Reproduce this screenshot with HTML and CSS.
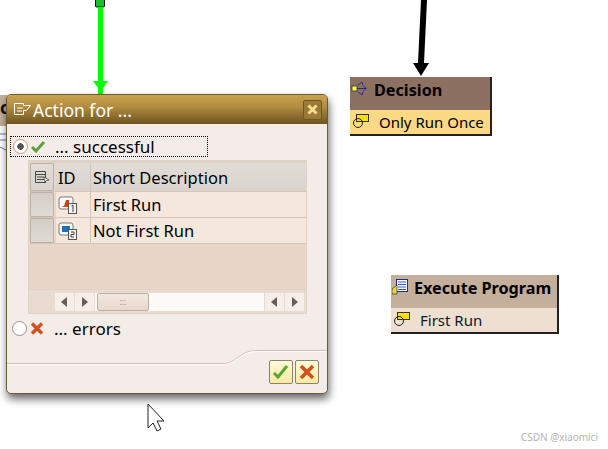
FILE: index.html
```html
<!DOCTYPE html>
<html lang="en">
<head>
  <meta charset="UTF-8" />
  <title>Action for ...</title>
  <link rel="stylesheet" href="styles.css">
</head>
<body>

<!-- workflow canvas -->
<main class="canvas">
  <svg class="links" width="608" height="449" xmlns="http://www.w3.org/2000/svg" aria-hidden="true">
    <rect x="95.5" y="-4" width="9" height="11" rx="1" fill="#18c030" stroke="#111"/>
    <rect x="98" y="7" width="5" height="79" fill="#00ff00"/>
    <polygon points="93,81 108,81 103,88 103,94 98,94 98,88" fill="#00ff00"/>
    <polygon points="421,0 427,0 424,63 429,63 421,76 413,63 418,63" fill="#000"/>
    <path d="M148 404v24l5-5 4 8 4-2-4-8h7z" fill="#fff" stroke="#222"/>
    <path d="M0 134h6M0 140h6M0 147l6 3" stroke="#5a7a9a" fill="none"/>
  </svg>

  <div class="hidden-node">c</div>

  <section class="node node-decision">
    <div class="node-head">
      <svg width="18" height="16" viewBox="0 0 18 16" aria-hidden="true">
        <rect x="1" y="5" width="5" height="5" fill="#ffff40" stroke="#333" stroke-width="0.8"/>
        <path d="M6 7.5h9M15 7.5l-3-3M15 7.5l-3 3M7 4l4-3 1 3M7 11l4 3 1-3" fill="none" stroke="#1c2c9c"/>
      </svg>
      <span>Decision</span>
    </div>
    <div class="node-row">
      <svg width="18" height="14" viewBox="0 0 18 14" aria-hidden="true">
        <rect x="4.5" y="0.5" width="12" height="7" fill="#f4e000" stroke="#333"/>
        <circle cx="6" cy="9" r="4.5" fill="none" stroke="#222"/>
      </svg>
      <span>Only Run Once</span>
    </div>
  </section>

  <section class="node node-program">
    <div class="node-head">
      <svg width="16" height="16" viewBox="0 0 16 16" aria-hidden="true">
        <rect x="4.5" y="0.5" width="11" height="12" fill="#fff" stroke="#1c2c9c"/>
        <path d="M6 3h8M6 5.500h8M6 8h8M6 10.500h8" stroke="#3050d0"/>
        <polygon points="0,15 0,10 5,6 5,15" fill="#f0d040" stroke="#333" stroke-width="0.7"/>
      </svg>
      <span>Execute Program</span>
    </div>
    <div class="node-row">
      <svg width="18" height="14" viewBox="0 0 18 14" aria-hidden="true">
        <rect x="4.5" y="0.500" width="12" height="7" fill="#f4e000" stroke="#333"/>
        <circle cx="6" cy="9" r="4.500" fill="none" stroke="#222"/>
      </svg>
      <span>First Run</span>
    </div>
  </section>

  <!-- dialog -->
  <section class="dialog">
    <header class="dialog-title">
      <svg width="17" height="13" viewBox="0 0 17 13" aria-hidden="true">
        <path d="M0.500 0.500h9v2h7l-4 5h-3v4h-9z" fill="none" stroke="#fff"/>
        <path d="M3 5h6M3 8h5" stroke="#fff"/>
      </svg>
      <h1>Action for ...</h1>
      <button class="close-btn" title="Close">
        <svg width="11" height="11" viewBox="0 0 11 11" aria-hidden="true">
          <path d="M1.500 1.500l8 8M9.500 1.500l-8 8" stroke="#fbdc8c" stroke-width="3"/>
        </svg>
      </button>
    </header>

    <div class="dialog-body">
      <div class="option option-focus">
        <span class="radio radio-on"></span>
        <svg class="status" width="15" height="13" viewBox="0 0 15 13" aria-hidden="true">
          <path d="M1 7l4 4 8-9" fill="none" stroke="#5da23a" stroke-width="3"/>
        </svg>
        <span class="option-label">... successful</span>
      </div>

      <div class="table">
        <div class="table-row table-head">
          <div class="cell cell-select">
            <svg width="15" height="13" viewBox="0 0 15 13" aria-hidden="true">
              <path d="M0.500 0.500h10v11h-10zM0.500 3.500h10M2 6h7M2 8.500h7" fill="none" stroke="#444"/>
              <polygon points="9,6 14,9 11,9.500 10,12" fill="#fff" stroke="#333" stroke-width="0.7"/>
            </svg>
          </div>
          <div class="cell cell-id">ID</div>
          <div class="cell cell-text">Short Description</div>
        </div>
        <div class="table-row">
          <div class="cell cell-select"></div>
          <div class="cell cell-id">
            <svg width="19" height="18" viewBox="0 0 19 18" aria-hidden="true">
              <rect x="1" y="1" width="14" height="12" rx="2" fill="#fff" stroke="#777"/>
              <path d="M3 11l3-1 2-6h3v7z" fill="#d04010"/>
              <rect x="10.500" y="7.500" width="8" height="10" fill="#f4f4f4" stroke="#555"/>
              <path d="M13.500 10l1.500-1v7" fill="none" stroke="#444"/>
            </svg>
          </div>
          <div class="cell cell-text">First Run</div>
        </div>
        <div class="table-row">
          <div class="cell cell-select"></div>
          <div class="cell cell-id">
            <svg width="19" height="18" viewBox="0 0 19 18" aria-hidden="true">
              <rect x="1" y="1" width="14" height="12" rx="2" fill="#fff" stroke="#777"/>
              <rect x="4" y="4" width="8" height="6" fill="#1c70b4"/>
              <rect x="10.500" y="7.500" width="8" height="10" fill="#f4f4f4" stroke="#555"/>
              <path d="M13 10h3v2.500h-3v2.500h3" fill="none" stroke="#444"/>
            </svg>
          </div>
          <div class="cell cell-text">Not First Run</div>
        </div>
        <div class="table-empty"></div>
        <div class="table-scroll">
          <button class="arrow arrow-left"></button>
          <button class="arrow arrow-right"></button>
          <div class="track"><div class="thumb">:::</div></div>
          <button class="arrow arrow-left"></button>
          <button class="arrow arrow-right"></button>
        </div>
      </div>

      <div class="option">
        <span class="radio"></span>
        <svg class="status" width="15" height="13" viewBox="0 0 15 13" aria-hidden="true">
          <path d="M2 1.500l10 10M12 1.500l-10 10" stroke="#d2501e" stroke-width="3.400"/>
        </svg>
        <span class="option-label">... errors</span>
      </div>
    </div>

    <footer class="dialog-foot">
      <svg class="foot-curve" width="320" height="24" viewBox="0 0 320 24" aria-hidden="true">
        <path d="M0 13.500H217C230 13.500 232 0.500 250 0.500H320" fill="none" stroke="#cfc0b4"/>
        <path d="M0 14.500H217C230 14.500 232 1.500 250 1.500H320" fill="none" stroke="#fff"/>
      </svg>
      <button class="foot-btn">
        <svg width="18" height="16" viewBox="0 0 18 16" aria-hidden="true">
          <path d="M2 9l4 4 9-11" fill="none" stroke="#5da23a" stroke-width="3"/>
        </svg>
      </button>
      <button class="foot-btn">
        <svg width="16" height="16" viewBox="0 0 16 16" aria-hidden="true">
          <path d="M2 2l12 12M14 2l-12 12" stroke="#d2501e" stroke-width="3.600"/>
        </svg>
      </button>
    </footer>
  </section>

  <div class="watermark">CSDN @xiaomici</div>
</main>

</body>
</html>
```

FILE: styles.css
```css
* {
  box-sizing: border-box;
}

body {
  margin: 0;
  background: #fff;
  font-family: "Noto Sans", sans-serif;
  overflow: hidden;
}

.canvas {
  position: relative;
  width: 608px;
  height: 449px;
  overflow: hidden;
}

.links {
  position: absolute;
  left: 0;
  top: 0;
}

/* nodes of the workflow */
.hidden-node {
  position: absolute;
  left: 0;
  top: 95px;
  width: 12px;
  height: 31px;
  background: #c4ae9c;
  font-size: 17px;
  font-weight: 700;
  line-height: 26px;
  color: #111;
}

.node {
  position: absolute;
  border-right: 2px solid #222;
  border-bottom: 2px solid #222;
  color: #000;
}

.node-decision {
  left: 350px;
  top: 77px;
  width: 142px;
  height: 59px;
}

.node-program {
  left: 391px;
  top: 275px;
  width: 168px;
  height: 59px;
}

.node-head {
  display: flex;
  align-items: center;
  gap: 5px;
  height: 33px;
  padding: 0 0 7px 1px;
  font-size: 16.200px;
  font-weight: 700;
  white-space: nowrap;
}

.node-head svg {
  margin-top: -3px;
}

.node-row {
  display: flex;
  align-items: center;
  gap: 9px;
  height: 24px;
  padding-left: 2px;
  font-size: 15px;
  white-space: nowrap;
}

.node-row svg {
  margin-top: -2px;
}

.node-decision .node-head {
  background: #8c7062;
}

.node-decision .node-row {
  background: #fbd985;
}

.node-program .node-head {
  background: #c4ae9c;
  gap: 6px;
}

.node-program .node-row {
  background: #eedfd0;
  gap: 9px;
  color: #101828;
}

/* dialog window */
.dialog {
  position: absolute;
  left: 6px;
  top: 94px;
  width: 322px;
  height: 300px;
  display: flex;
  flex-direction: column;
  background: #f4ece8;
  border: 1px solid #6e5a32;
  border-radius: 5px;
  box-shadow: 1px 5px 8px rgba(0, 0, 0, 0.6);
}

.dialog-title {
  display: flex;
  align-items: center;
  height: 29px;
  padding: 0 5px 0 7px;
  border-radius: 4px 4px 0 0;
  background: linear-gradient(#c9a24f, #b38d40 40%, #6f5420);
  color: #fff;
}

.dialog-title h1 {
  flex: 1;
  margin: 0 0 0 2px;
  font-size: 17.500px;
  font-weight: 400;
}

.close-btn {
  display: flex;
  align-items: center;
  justify-content: center;
  width: 19px;
  height: 20px;
  padding: 0;
  background: #9a7a38;
  border: 1px solid #6e5522;
  border-radius: 2px;
}

.dialog-body {
  flex: 1;
  padding: 12px 0 0 3px;
}

.option {
  display: flex;
  align-items: center;
  height: 21px;
  width: 198px;
  padding-left: 2px;
  font-size: 17px;
  color: #000;
}

.option-focus {
  border: 1px dotted #000;
}

.radio {
  width: 15px;
  height: 15px;
  border-radius: 50%;
  border: 1px solid #9a8f88;
  background: #fff;
}

.radio-on {
  border-color: #c09a78;
  background: radial-gradient(circle, #555 0 3px, #fff 3.500px);
}

.status {
  margin-left: 3px;
}

.option-label {
  margin-left: 9px;
}

.option + .table {
  margin: 3px 0 0 18px;
}

.table {
  width: 279px;
  height: 154px;
  display: flex;
  flex-direction: column;
  background: #e8d7c8;
  border: 1px solid #e0d2c6;
  border-top-width: 3px;
  font-size: 16.500px;
  color: #000;
}

.table-row {
  display: flex;
  height: 26px;
  margin-left: 1px;
  border-bottom: 1px solid #d3c5ba;
}

.table-head {
  height: 29px;
}

.table-head .cell {
  background: linear-gradient(#e2dcd6, #dbd4ce);
}

.cell {
  display: flex;
  align-items: center;
  padding-left: 2px;
  background: #f5e7dc;
  border-right: 1px solid #d3c5ba;
}

.cell-select {
  width: 24px;
  justify-content: center;
  padding: 0;
  background: linear-gradient(#d5cec8, #e0dad4);
  border: 1px solid #bdb2a8;
  border-radius: 1px;
}

.cell-id {
  width: 35px;
  margin-left: 2px;
}

.cell-text {
  flex: 1;
  padding-left: 2px;
  border-right: 0;
}

.table-empty {
  flex: 1;
}

.table-scroll {
  display: flex;
  align-items: center;
  gap: 1px;
  height: 24px;
  padding: 2px 2px 2px 26px;
  background: #e8dcd0;
  border-top: 1px solid #e0d2c6;
}

.arrow {
  position: relative;
  width: 19px;
  height: 18px;
  padding: 0;
  background: #f6efe9;
  border: 0;
}

.arrow::after {
  content: "";
  position: absolute;
  top: 4px;
  border-top: 5px solid transparent;
  border-bottom: 5px solid transparent;
}

.arrow-left::after {
  left: 6px;
  border-right: 6px solid #6b5d55;
}

.arrow-right::after {
  left: 7px;
  border-left: 6px solid #6b5d55;
}

.track {
  flex: 1;
  height: 18px;
  background: #fcfaf7;
}

.thumb {
  width: 52px;
  height: 18px;
  margin-left: 2px;
  text-align: center;
  font-size: 9px;
  line-height: 15px;
  color: #a09488;
  background: linear-gradient(#f4e9e0, #e6d8cc);
  border: 1px solid #bdb0a4;
  border-radius: 2px;
}

.option + .table + .option {
  margin-top: 4px;
}

.dialog-foot {
  position: relative;
  display: flex;
  justify-content: flex-end;
  gap: 2px;
  height: 50px;
  padding: 17px 8px 0 0;
}

.foot-curve {
  position: absolute;
  left: 0;
  top: 7px;
}

.foot-btn {
  position: relative;
  display: flex;
  align-items: center;
  justify-content: center;
  width: 24px;
  height: 24px;
  padding: 0;
  background: linear-gradient(#fffbd8, #fbe9a0);
  border: 1px solid #8a8272;
  border-radius: 2px;
}

.watermark {
  position: absolute;
  right: 10px;
  bottom: 5px;
  font-size: 10px;
  color: #b4b4b4;
}
```
